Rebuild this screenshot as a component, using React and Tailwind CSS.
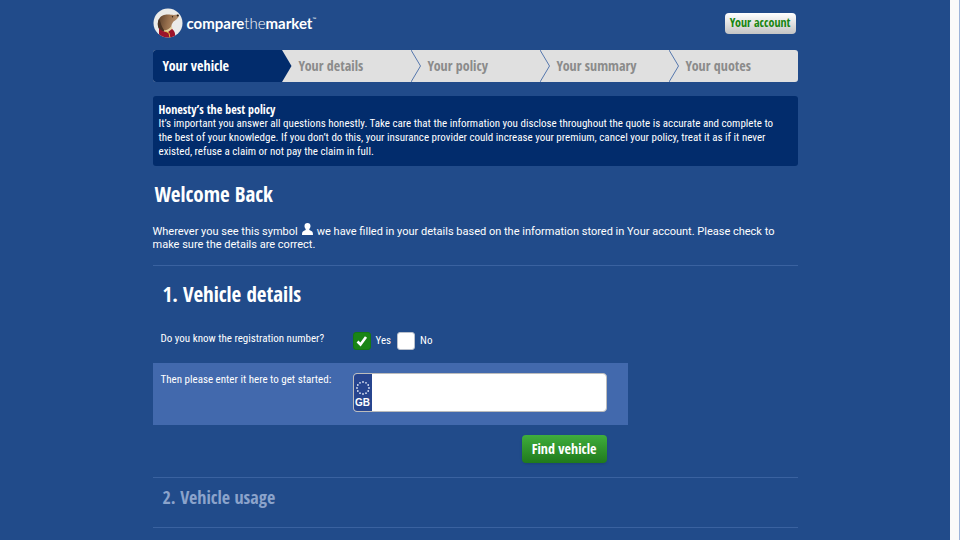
import React, { useState } from 'react';

const STEPS = ['Your vehicle', 'Your details', 'Your policy', 'Your summary', 'Your quotes'];

function Logo() {
  return (
    <a href="#home" className="flex items-center gap-1 text-white">
      <svg viewBox="0 0 30 30" className="h-[30px] w-[30px]" aria-hidden="true">
        <defs>
          <clipPath id="badge">
            <circle cx="15" cy="15" r="14.5" />
          </clipPath>
          <linearGradient id="fur" x1="0" y1="0.2" x2="1" y2="0.4">
            <stop offset="0" stopColor="#5a3f2b" />
            <stop offset="0.5" stopColor="#98704d" />
            <stop offset="1" stopColor="#bd9874" />
          </linearGradient>
        </defs>
        <circle cx="15" cy="15" r="14.5" fill="#ebebe9" />
        <g clipPath="url(#badge)">
          <path d="M8 23 C4.500 20 4 15 6 11 C8 7.500 11 6.500 15 6.500 C18 6.500 20 7.500 24.500 6.500 C26 6.500 26 8.500 25 9.800 C23.500 12 20.500 13 19.500 15 C18 17 18 20 19 22 L14 26 Z" fill="url(#fur)" />
          <path d="M8 23 C4.500 20 4 15 6 11 C8 14 8 19 12 23 Z" fill="#4a3323" />
          <circle cx="24.800" cy="7.500" r="1.100" fill="#2b1d15" />
          <circle cx="19.500" cy="8.800" r="0.700" fill="#2b1d15" />
          <path d="M11 22 C14 23 17 20 18.500 18 C20 20 20 24 18 26 L12 27 Z" fill="#e6d3a4" />
          <path d="M6 20 C8 23 12 24.500 15 24 L19 21 C22 23 22.500 26 22 30 L6 30 Z" fill="#9c142b" />
          <path d="M12 23 L16 25 L17 30" fill="none" stroke="#e0b33e" strokeWidth="1" />
        </g>
      </svg>
      <span className="flex items-start text-[15px] leading-5">
        <span>
          <b>compare</b>
          <span className="font-light">the</span>
          <b>market</b>
        </span>
        <span className="text-[5px] leading-3">™</span>
      </span>
    </a>
  );
}

function StepDivider({ active }) {
  return (
    <svg viewBox="0 0 10 32" className="h-8 w-[10px] shrink-0" aria-hidden="true">
      {active ? (
        <path d="M0 0 L9.500 16 L0 32 Z" fill="#022c6c" />
      ) : (
        <path d="M0 0 L9.500 16 L0 32" fill="none" stroke="#5577ad" strokeWidth="1" />
      )}
    </svg>
  );
}

function Steps({ current }) {
  return (
    <nav aria-label="Progress">
      <ol className="flex h-8 overflow-hidden rounded-[3px] bg-[#e0e0e0] font-['Open_Sans_Condensed','Open_Sans',sans-serif] text-[14px] font-bold">
        {STEPS.map((step, i) => (
          <li key={step} className="flex flex-1 items-center">
            {i > 0 && <StepDivider active={i - 1 === current} />}
            <a
              href={`#step-${i + 1}`}
              aria-current={i === current ? 'step' : undefined}
              className={
                i === current
                  ? 'flex h-full flex-1 items-center bg-[#022c6c] pl-[10px] text-white'
                  : 'flex h-full flex-1 items-center pl-[7px] text-[#8b8b8b]'
              }
            >
              {step}
            </a>
          </li>
        ))}
      </ol>
    </nav>
  );
}

function PersonIcon() {
  return (
    <svg viewBox="0 0 11 12" className="mx-1 inline-block h-3 w-[11px] align-baseline" aria-hidden="true">
      <path
        d="M5.500 0 C7.400 0 8.500 1.300 8.500 3.100 C8.500 4.500 7.900 5.600 7.200 6.300 C7.200 7.200 8 7.400 9.300 7.900 C10.600 8.500 11 9.500 11 12 H0 C0 9.500 0.400 8.500 1.700 7.900 C3 7.400 3.800 7.200 3.800 6.300 C3.100 5.600 2.500 4.500 2.500 3.100 C2.500 1.300 3.600 0 5.500 0 Z"
        fill="#fff"
      />
    </svg>
  );
}

function Choice({ label, checked, onChange }) {
  return (
    <label className="flex items-center gap-[5px]">
      <span className="grid h-[18px] w-[18px] place-items-center">
        <input
          type="radio"
          name="knowsReg"
          checked={checked}
          onChange={onChange}
          className="col-start-1 row-start-1 h-[18px] w-[18px] appearance-none rounded-[3px] border border-[#b9c0cc] bg-white checked:border-[#147a12] checked:bg-[#1a8516]"
        />
        {checked && (
          <svg viewBox="0 0 12 12" className="pointer-events-none col-start-1 row-start-1 h-3 w-3" aria-hidden="true">
            <path d="M1.500 6.500 L4.500 9.500 L10 2" fill="none" stroke="#fff" strokeWidth="2.600" />
          </svg>
        )}
      </span>
      {label}
    </label>
  );
}

// Twelve stars arranged in a ring, as on a number plate
function PlateBadge() {
  const stars = Array.from({ length: 12 }, (_, i) => {
    const a = (i * Math.PI) / 6;
    return [9 + 6 * Math.sin(a), 7 - 6 * Math.cos(a)];
  });
  return (
    <span className="flex w-[18px] shrink-0 flex-col items-center justify-end gap-[2px] bg-[#27458f] pb-[2px] text-white">
      <svg viewBox="0 0 18 14" className="h-[14px] w-[18px]" aria-hidden="true">
        {stars.map(([x, y], i) => (
          <circle key={i} cx={x} cy={y} r="0.900" fill="#d5ddf0" />
        ))}
      </svg>
      <b className="font-['Liberation_Sans',sans-serif] text-[10px] leading-3">GB</b>
    </span>
  );
}

export default function App() {
  const [knowsReg, setKnowsReg] = useState(true);
  const [reg, setReg] = useState('');

  return (
    <div className="flex min-h-screen bg-[#fafafa] font-['Lato',sans-serif]">
      <div className="min-w-0 flex-1 bg-[#214b8a] text-[11px] leading-[14px] text-white">
        <div className="mx-auto max-w-[645px]">
          <header className="flex h-[50px] items-center justify-between pb-1">
            <Logo />
            <button
              type="button"
              className="mr-[2px] h-[21px] rounded bg-linear-to-b from-white to-[#c4c4c4] px-[5px] font-['Open_Sans_Condensed','Open_Sans',sans-serif] text-[12px] font-bold text-[#17860f]"
            >
              Your account
            </button>
          </header>

          <Steps current={0} />

          <main className="font-['Roboto_Condensed','Roboto',sans-serif]">
            <section className="mt-[14px] rounded-[3px] bg-[#022c6c] py-[7px] pr-4 pl-[6px]">
              <h2 className="font-['Open_Sans_Condensed','Open_Sans',sans-serif] text-[12px] leading-[14px] font-bold">
                Honesty’s the best policy
              </h2>
              <p>
                It’s important you answer all questions honestly. Take care that the information you disclose throughout
                the quote is accurate and complete to the best of your knowledge. If you don’t do this, your insurance
                provider could increase your premium, cancel your policy, treat it as if it never existed, refuse a
                claim or not pay the claim in full.
              </p>
            </section>

            <h1 className="mt-4 pl-[2px] font-['Open_Sans_Condensed','Open_Sans',sans-serif] text-[21px] leading-6 font-bold">
              Welcome Back
            </h1>
            <p className="mt-[17px] pr-2 pb-[14px] font-['Roboto',sans-serif] leading-[13px]">
              Wherever you see this symbol
              <PersonIcon />
              we have filled in your details based on the information stored in Your account. Please check to make sure
              the details are correct.
            </p>

            <form className="border-t border-[#3a62a0]" onSubmit={(e) => e.preventDefault()}>
              <h2 className="mt-4 pl-[10px] font-['Open_Sans_Condensed','Open_Sans',sans-serif] text-[21px] leading-6 font-bold">
                1. Vehicle details
              </h2>

              <fieldset className="mt-[26px] flex items-start pl-2">
                <legend className="float-left w-[192px]">Do you know the registration number?</legend>
                <div className="flex items-center gap-[6px]">
                  <Choice label="Yes" checked={knowsReg} onChange={() => setKnowsReg(true)} />
                  <Choice label="No" checked={!knowsReg} onChange={() => setKnowsReg(false)} />
                </div>
              </fieldset>

              <div className="mt-[13px] flex max-w-[475px] items-start bg-[#4269ad] pt-[10px] pr-[21px] pb-[13px] pl-2">
                <label htmlFor="reg" className="w-[192px] shrink-0">
                  Then please enter it here to get started:
                </label>
                <div className="flex h-[39px] flex-1 overflow-hidden rounded border border-[#bcbcbc] bg-white">
                  <PlateBadge />
                  <input
                    id="reg"
                    type="text"
                    value={reg}
                    onChange={(e) => setReg(e.target.value.toUpperCase())}
                    className="min-w-0 flex-1 px-2 text-xl font-bold text-black outline-none"
                  />
                </div>
              </div>

              <div className="flex max-w-[475px] justify-end pt-[10px] pr-[21px] pb-[14px]">
                <button
                  type="submit"
                  className="h-7 rounded bg-linear-to-b from-[#3fae3c] to-[#207a1c] px-[10px] font-['Open_Sans_Condensed','Open_Sans',sans-serif] text-[14px] font-bold shadow-sm"
                >
                  Find vehicle
                </button>
              </div>
            </form>

            <section className="border-y border-[#3a62a0] pt-[7px] pb-[18px] pl-[10px]">
              <h2 className="font-['Open_Sans_Condensed','Open_Sans',sans-serif] text-[18px] leading-6 font-bold text-[#8ba3cb]">
                2. Vehicle usage
              </h2>
            </section>
          </main>
        </div>
      </div>
      <div className="w-[10px] shrink-0 border-r border-[#9db4da]" />
    </div>
  );
}
